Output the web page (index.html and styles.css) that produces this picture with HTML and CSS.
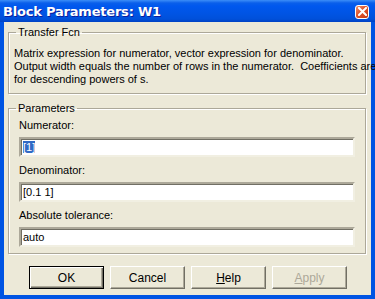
FILE: index.html
```
<!doctype html>
<html lang="en">
  <head>
    <meta charset="utf-8">
    <title>Block Parameters: W1</title>
    <link rel="stylesheet" href="styles.css">
  </head>
  <body>
    <div class="window">
      <div class="titlebar">
        <span class="title">Block Parameters: W1</span>
        <span class="close">
          <svg width="9" height="9" viewBox="0 0 9 9">
            <path d="M1 1 L8 8 M8 1 L1 8" stroke="#fff" stroke-width="2" stroke-linecap="square"/>
          </svg>
        </span>
      </div>

      <div class="client">
        <fieldset class="group">
          <legend>Transfer Fcn</legend>
          <p class="desc">Matrix expression for numerator, vector expression for denominator.<br>Output width equals the number of rows in the numerator.&nbsp; Coefficients are<br>for descending powers of s.</p>
        </fieldset>

        <fieldset class="group params">
          <legend>Parameters</legend>
          <label class="field">
            <span class="caption">Numerator:</span>
            <span class="edit"><span class="sel">[1]</span></span>
          </label>
          <label class="field">
            <span class="caption">Denominator:</span>
            <span class="edit">[0.1 1]</span>
          </label>
          <label class="field">
            <span class="caption">Absolute tolerance:</span>
            <span class="edit">auto</span>
          </label>
        </fieldset>

        <div class="buttons">
          <button class="btn default">OK</button>
          <button class="btn">Cancel</button>
          <button class="btn"><u>H</u>elp</button>
          <button class="btn" disabled><u>A</u>pply</button>
        </div>
      </div>
    </div>
  </body>
</html>
```

FILE: styles.css
```
html, body { margin: 0; }
body {
    font-family: "Liberation Sans", Arial, sans-serif;
    font-size: 11px;
    color: #000;
    background: #ECE9D8;
}

.window {
    width: 375px;
    height: 299px;
    box-sizing: border-box;
    display: flex;
    flex-direction: column;
    background: #0054E3;
}

.titlebar {
    height: 22px;
    flex: none;
    display: flex;
    align-items: center;
    justify-content: space-between;
    padding: 0 6px 0 3px;
    background: linear-gradient(#3C8EF8 0, #0A5FEA 3px, #0058EE 6px, #0054E3 14px, #0050DA 19px, #0042C4 22px);
    color: #fff;
}
.title {
    font-family: "DejaVu Sans", sans-serif;
    font-weight: bold;
    font-size: 13px;
    letter-spacing: -0.2px;
    text-shadow: 1px 1px #0A1E9C;
}
.close {
    width: 14px;
    height: 14px;
    margin-top: 1px;
    box-sizing: border-box;
    border: 1px solid #fff;
    border-radius: 3px;
    background: linear-gradient(135deg, #F0936E, #E0542C 45%, #C53A14);
    display: flex;
    align-items: center;
    justify-content: center;
}
.close svg { display: block; }

.client {
    flex: 1;
    margin: 0 4px 4px 4px;
    background: #ECE9D8;
    padding: 3px 5px 0 4px;
    display: flex;
    flex-direction: column;
}

.group {
    margin: 0;
    padding: 0;
    border: 1px solid #ACA899;
    box-shadow: inset 1px 1px #fff, 1px 1px #fff;
    min-width: 0;
}
.group legend {
    margin-left: 7px;
    padding: 0 2px;
    line-height: 14px;
}
.desc {
    margin: 8px 0 7px 5px;
    line-height: 13px;
    white-space: nowrap;
}

.params {
    margin-top: 7px;
    padding-bottom: 6px;
}
.field {
    display: block;
    margin: 0 10px;
}
.caption {
    display: block;
    line-height: 14px;
    margin: 6px 0 5px 0;
}
.field:first-of-type .caption {
    margin-top: 3px;
}
.edit {
    display: block;
    height: 20px;
    box-sizing: border-box;
    background: #fff;
    border: 2px solid;
    border-color: #ACA899 #F1EFE2 #F1EFE2 #ACA899;
    box-shadow: inset 1px 1px #716F64;
    padding: 1px 2px;
    line-height: 15px;
}
.sel {
    background: #316AC5;
    color: #fff;
}

.buttons {
    display: flex;
    gap: 6px;
    padding: 12px 0 0 21px;
}
.btn {
    width: 75px;
    height: 23px;
    font: inherit;
    font-size: 12px;
    color: #000;
    background: #ECE9D8;
    border: 1px solid;
    border-color: #fff #716F64 #716F64 #fff;
    box-shadow: inset -1px -1px #ACA899;
    padding: 0;
}
.btn.default {
    border-color: #000;
    box-shadow: inset 1px 1px #fff, inset -1px -1px #716F64, inset -2px -2px #ACA899;
}
.btn:disabled {
    color: #ACA899;
}
```
